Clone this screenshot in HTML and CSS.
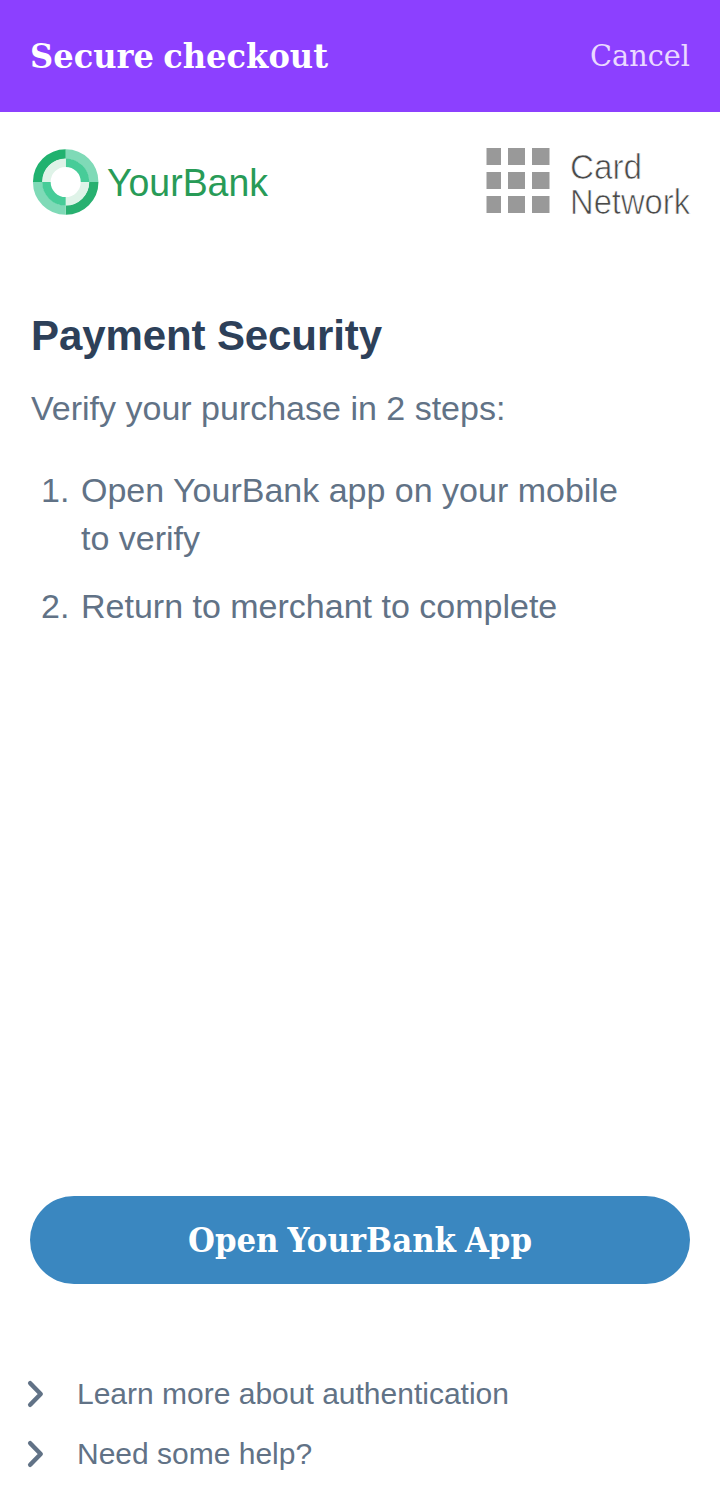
FILE: index.html
```html
<!DOCTYPE html>
<html lang="en">
<head>
<meta charset="utf-8">
<title>Secure checkout</title>
<link rel="stylesheet" href="styles.css">
</head>
<body>
<header class="topbar">
  <h1 class="topbar-title"><svg class="label" width="298" height="50"><text x="0" y="37" textLength="298" lengthAdjust="spacingAndGlyphs">Secure checkout</text></svg></h1>
  <a class="cancel"><svg class="label" width="100" height="50"><text x="0" y="35" textLength="100" lengthAdjust="spacingAndGlyphs">Cancel</text></svg></a>
</header>
<main class="page">
  <div class="brands">
    <svg class="bank" width="250" height="74" viewBox="0 0 250 74">
      <g fill="none" stroke-width="9.500">
        <path d="M35.700 7A28 28 0 0 1 63.700 35" stroke="#7fdab7"/>
        <path d="M63.700 35A28 28 0 0 1 35.700 63" stroke="#28b070"/>
        <path d="M35.700 63A28 28 0 0 1 7.700 35" stroke="#7fdab7"/>
        <path d="M7.700 35A28 28 0 0 1 35.700 7" stroke="#20b26f"/>
      </g>
      <g fill="none" stroke-width="8.500">
        <path d="M35.700 15.700A19.300 19.300 0 0 1 55 35" stroke="#47cc98"/>
        <path d="M55 35A19.300 19.300 0 0 1 35.700 54.300" stroke="#dff3e8"/>
        <path d="M35.700 54.300A19.300 19.300 0 0 1 16.400 35" stroke="#47cc98"/>
        <path d="M16.400 35A19.300 19.300 0 0 1 35.700 15.700" stroke="#dff3e8"/>
      </g>
      <text x="77" y="49" textLength="161" lengthAdjust="spacingAndGlyphs">YourBank</text>
    </svg>
    <svg class="network" width="204" height="80" viewBox="0 0 204 80">
      <path fill="#999" d="M.5 4h14.500v17H.5zM22 4h17v17H22zM46 4h17.500v17H46zM.5 28h14.500v17H.5zM22 28h17v17H22zM46 28h17.500v17H46zM.5 52h14.500v17H.5zM22 52h17v17H22zM46 52h17.500v17H46z"/>
      <text x="84" y="35" textLength="72" lengthAdjust="spacingAndGlyphs">Card</text>
      <text x="84" y="69.500" textLength="120" lengthAdjust="spacingAndGlyphs">Network</text>
    </svg>
  </div>
  <h2 class="heading">Payment Security</h2>
  <p class="intro">Verify your purchase in 2 steps:</p>
  <ol class="steps">
    <li><span>1.</span><span>Open YourBank app on your mobile<br>to verify</span></li>
    <li><span>2.</span><span>Return to merchant to complete</span></li>
  </ol>
  <button class="action"><svg class="label" width="346" height="50"><text x="1" y="37" textLength="344" lengthAdjust="spacingAndGlyphs">Open YourBank App</text></svg></button>
  <nav class="links">
    <a><svg width="20" height="28" viewBox="0 0 20 28"><path d="M3.200 3.200L13.700 14L3.200 24.800"/></svg>Learn more about authentication</a>
    <a><svg width="20" height="28" viewBox="0 0 20 28"><path d="M3.200 3.200L13.700 14L3.200 24.800"/></svg>Need some help?</a>
  </nav>
</main>
</body>
</html>
```
FILE: styles.css
```css
* { box-sizing: border-box; }
body { margin: 0; height: 1508px; background: #fff; color: #617286; font-family: "Liberation Sans", Arial, sans-serif; display: flex; flex-direction: column; }
.topbar { height: 112px; background: #8c40ff; display: flex; align-items: center; justify-content: space-between; padding: 0 30px; }
.label { display: block; overflow: visible; fill: #fff; font-family: "DejaVu Serif", serif; word-spacing: -2px; }
.topbar-title { margin: 0; font-size: 34px; font-weight: 700; }
.cancel { font-size: 29px; }
.cancel .label { fill: #ead9ff; }
.page { flex: 1; padding: 0 30px; display: flex; flex-direction: column; }
.brands { display: flex; justify-content: space-between; padding-top: 32px; height: 192px; }
.bank { margin-top: 3px; font-size: 39px; fill: #289b57; }
.network { font-size: 35px; fill: #4a4a4a; overflow: visible; }
.network text { stroke: #fff; stroke-width: .7px; }
.heading { margin: 7px 0 0 1px; font-size: 42px; line-height: 50px; color: #2d4059; letter-spacing: -.1px; }
.intro { margin: 23px 0 0 1px; font-size: 34px; line-height: 48px; }
.steps { list-style: none; margin: 34px 0 0; padding: 0 0 0 11px; font-size: 34px; line-height: 48px; display: flex; flex-direction: column; gap: 20px; }
.steps li { display: flex; }
.steps li span:first-child { width: 40px; }
.action { margin-top: auto; flex: 0 0 88px; border: 0; border-radius: 44px; background: #3a87c0; display: flex; align-items: center; justify-content: center; font-size: 33px; font-weight: 700; }
.links { padding: 80px 0 24px; font-size: 30px; line-height: 60px; }
.links a { display: flex; align-items: center; gap: 30px; margin-left: -3px; }
.links svg { fill: none; stroke: #617286; stroke-width: 4.500; stroke-linecap: round; stroke-linejoin: round; }
```
